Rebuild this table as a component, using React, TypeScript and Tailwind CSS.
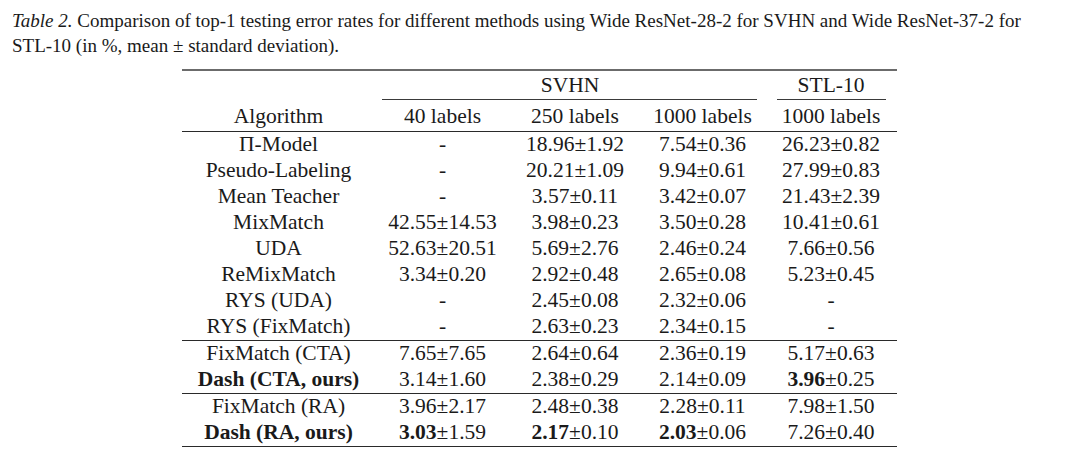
type Cell = { bold?: string; rest: string } | string;

type Row = {
  name: string;
  strong?: boolean;
  cells: Cell[];
};

const PM = "\u00B1";
const pm = (a: string, b: string) => `${a}${PM}${b}`;

const groups: Row[][] = [
  [
    { name: "\u03A0-Model", cells: ["-", pm("18.96", "1.92"), pm("7.54", "0.36"), pm("26.23", "0.82")] },
    { name: "Pseudo-Labeling", cells: ["-", pm("20.21", "1.09"), pm("9.94", "0.61"), pm("27.99", "0.83")] },
    { name: "Mean Teacher", cells: ["-", pm("3.57", "0.11"), pm("3.42", "0.07"), pm("21.43", "2.39")] },
    { name: "MixMatch", cells: [pm("42.55", "14.53"), pm("3.98", "0.23"), pm("3.50", "0.28"), pm("10.41", "0.61")] },
    { name: "UDA", cells: [pm("52.63", "20.51"), pm("5.69", "2.76"), pm("2.46", "0.24"), pm("7.66", "0.56")] },
    { name: "ReMixMatch", cells: [pm("3.34", "0.20"), pm("2.92", "0.48"), pm("2.65", "0.08"), pm("5.23", "0.45")] },
    { name: "RYS (UDA)", cells: ["-", pm("2.45", "0.08"), pm("2.32", "0.06"), "-"] },
    { name: "RYS (FixMatch)", cells: ["-", pm("2.63", "0.23"), pm("2.34", "0.15"), "-"] },
  ],
  [
    { name: "FixMatch (CTA)", cells: [pm("7.65", "7.65"), pm("2.64", "0.64"), pm("2.36", "0.19"), pm("5.17", "0.63")] },
    {
      name: "Dash (CTA, ours)",
      strong: true,
      cells: [pm("3.14", "1.60"), pm("2.38", "0.29"), pm("2.14", "0.09"), { bold: "3.96", rest: PM + "0.25" }],
    },
  ],
  [
    { name: "FixMatch (RA)", cells: [pm("3.96", "2.17"), pm("2.48", "0.38"), pm("2.28", "0.11"), pm("7.98", "1.50")] },
    {
      name: "Dash (RA, ours)",
      strong: true,
      cells: [
        { bold: "3.03", rest: PM + "1.59" },
        { bold: "2.17", rest: PM + "0.10" },
        { bold: "2.03", rest: PM + "0.06" },
        pm("7.26", "0.40"),
      ],
    },
  ],
];

const cols = "grid grid-cols-[193px_135px_130px_125px_132px]";
const cell = "text-center whitespace-nowrap font-['Liberation_Serif'] text-[21.5px] leading-none";
// the family class alone did not take, so set it on each text node too
const serif = { fontFamily: "'Liberation Serif', 'Times New Roman', serif" };

const Value = ({ value }: { value: Cell }) => {
  if (typeof value === "string") return <>{value}</>;
  return (
    <>
      <span className="font-bold" style={serif}>
        {value.bold}
      </span>
      {value.rest}
    </>
  );
};

const Head = ({ label, span }: { label: string; span?: boolean }) => (
  <div className={span ? `${cell} col-span-3 pt-[2px]` : `${cell} pt-[2px]`} style={serif}>
    {label}
  </div>
);

export default function App() {
  return (
    <div className="w-[1080px] h-[457px] bg-white text-[#1a1a1a] overflow-hidden font-['Liberation_Serif']" style={serif}>
      <p className="pt-[8px] pl-[12px] font-['Liberation_Serif'] text-[19px] leading-[25px] whitespace-nowrap" style={serif}>
        <span className="italic" style={serif}>
          Table 2.
        </span>{" "}
        Comparison of top-1 testing error rates for different methods using Wide ResNet-28-2 for SVHN and Wide
        ResNet-37-2 for
        <br />
        STL-10 (in %, mean {PM} standard deviation).
      </p>

      <div className="ml-[182px] mt-[11px] w-[715px]">
        <div className="h-[2px] bg-[#6b6b6b]" />

        <div className={`${cols} h-[28px] items-center`}>
          <div />
          <Head label="SVHN" span />
          <Head label="STL-10" />
        </div>

        <div className={`${cols} h-px`}>
          <div />
          <div className="col-span-3 ml-[7px] mr-[8px] bg-[#3a3a3a]" />
          <div className="ml-[12px] mr-[11px] bg-[#3a3a3a]" />
        </div>

        <div className={`${cols} h-[31px] items-center`}>
          <Head label="Algorithm" />
          <Head label="40 labels" />
          <Head label="250 labels" />
          <Head label="1000 labels" />
          <Head label="1000 labels" />
        </div>

        {groups.map((group, gi) => (
          <div key={gi}>
            <div className="h-px bg-[#2a2a2a]" />
            {group.map((row) => (
              <div key={row.name} className={`${cols} h-[26px] items-center`}>
                <div className={row.strong ? `${cell} font-bold` : cell} style={serif}>
                  {row.name}
                </div>
                {row.cells.map((c, ci) => (
                  <div key={ci} className={cell} style={serif}>
                    <Value value={c} />
                  </div>
                ))}
              </div>
            ))}
          </div>
        ))}
        <div className="h-px bg-[#2a2a2a]" />
      </div>
    </div>
  );
}
